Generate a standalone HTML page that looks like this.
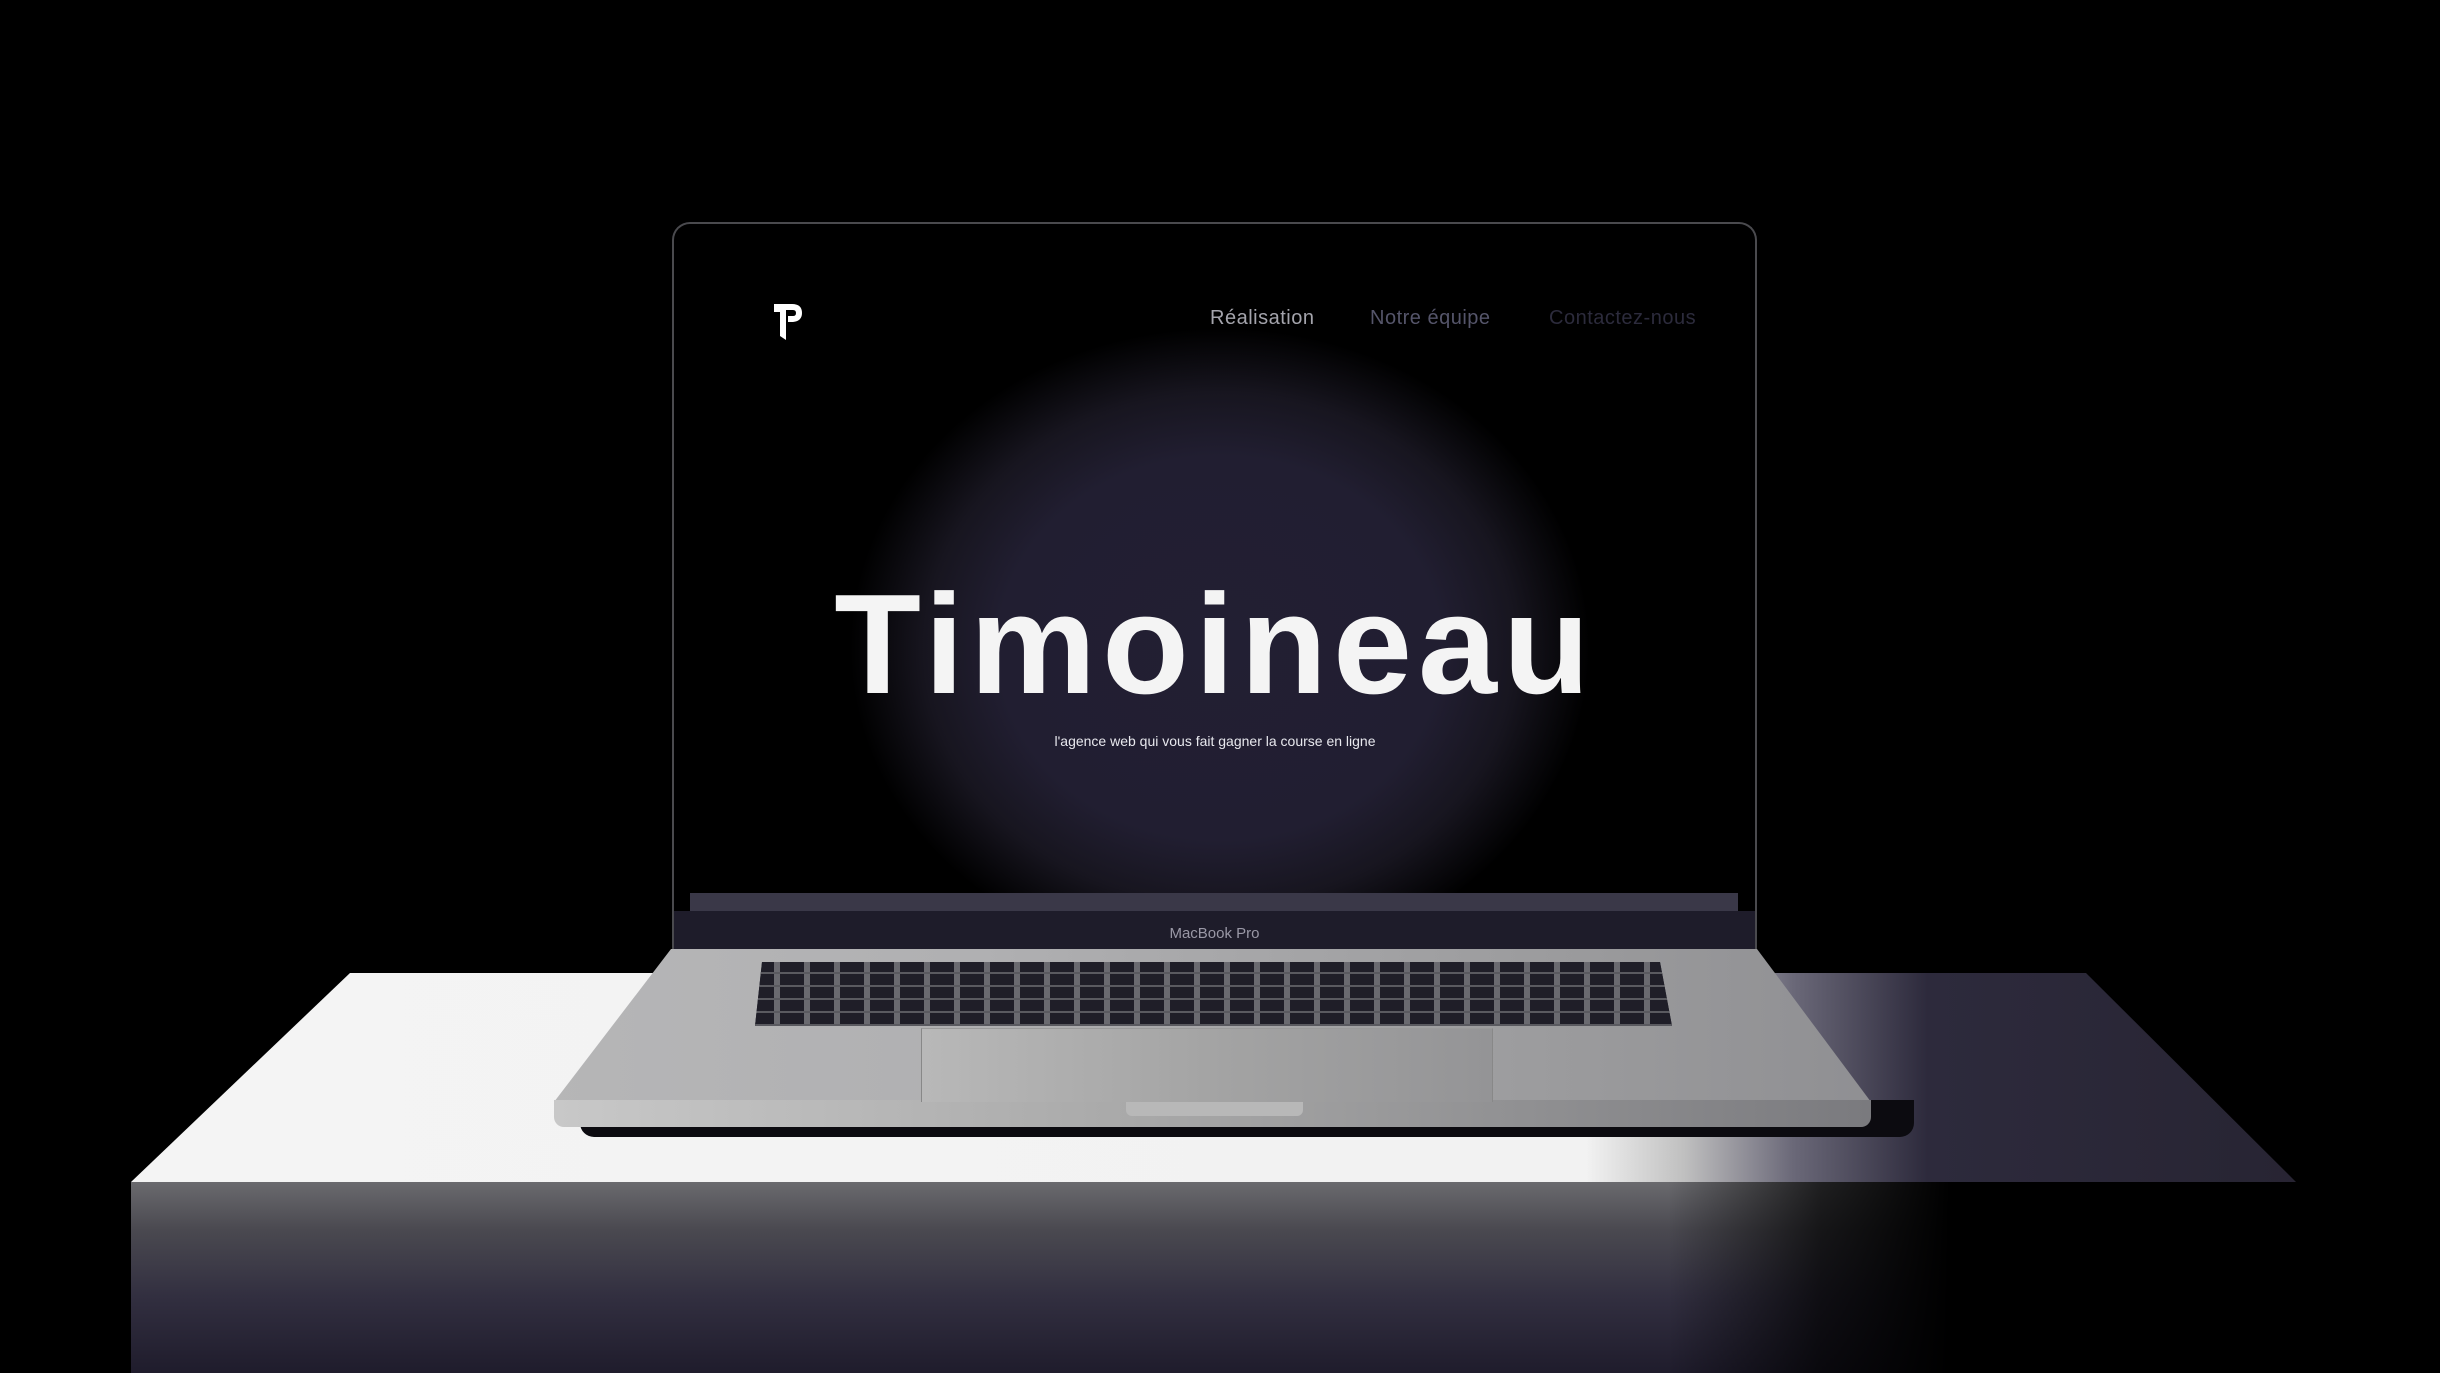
<!DOCTYPE html>
<html><head><meta charset="utf-8"><style>
*{margin:0;padding:0;box-sizing:border-box}
html,body{width:2440px;height:1373px;background:#000;overflow:hidden;position:relative;font-family:"Liberation Sans",sans-serif}
.abs{position:absolute}
</style></head><body>
<!-- table top -->
<div class="abs" style="left:0;top:0;width:2440px;height:1373px;clip-path:polygon(350px 973px,2086px 973px,2296px 1182px,131px 1182px);background:linear-gradient(90deg,#f4f4f4 0%,#f2f2f2 65%,#c0c0c0 69%,#6a6878 73.5%,#2d2a3c 79%,#25222f 100%)"></div>
<!-- front face -->
<div class="abs" style="left:131px;top:1182px;width:2165px;height:191px;background:linear-gradient(180deg,#6a6a6e 0%,#4a4950 25%,#322f40 60%,#1f1c2c 100%)"></div>
<div class="abs" style="left:131px;top:1182px;width:2165px;height:191px;background:linear-gradient(90deg,rgba(0,0,0,0) 0%,rgba(0,0,0,0) 71%,rgba(0,0,0,.7) 78%,#000 84%)"></div>
<!-- laptop shadow -->
<div class="abs" style="left:580px;top:1100px;width:1334px;height:37px;background:#0c0b10;border-radius:0 0 14px 14px"></div>
<!-- screen lid -->
<div class="abs" style="left:672px;top:222px;width:1085px;height:730px;background:#000;border:2px solid #4a4a4e;border-bottom:none;border-radius:18px 18px 0 0"></div>
<div class="abs" style="left:690px;top:238px;width:1048px;height:660px;background:radial-gradient(ellipse 370px 320px at 530px 410px,#221f33 0%,#211e31 60%,#17151f 80%,rgba(0,0,0,0) 100%)"></div>
<!-- nav -->
<svg class="abs" style="left:772px;top:302px" width="34" height="40" viewBox="0 0 34 40"><path d="M2 2 L20 2 Q30 2 30 11 Q30 19 21 20 L16 20 L16 14 L21 14 Q24 14 24 11 Q24 8 21 8 L14 8 L14 38 L8 34 L8 10 L2 10 Z" fill="#fff"/></svg>
<div class="abs" style="left:1210px;top:307px;font-size:20px;color:#a4a4ac;letter-spacing:.5px">Réalisation</div>
<div class="abs" style="left:1370px;top:307px;font-size:20px;color:#55556a;letter-spacing:.5px">Notre équipe</div>
<div class="abs" style="left:1549px;top:307px;font-size:20px;color:#2c2b3c;letter-spacing:.5px">Contactez-nous</div>
<!-- title -->
<div class="abs" style="left:700px;top:560px;width:1030px;text-align:center;font-size:142px;color:#f4f4f4;letter-spacing:6px;line-height:1;padding-top:14px;font-weight:bold">Timoineau</div>
<div class="abs" style="left:700px;top:733px;width:1030px;text-align:center;font-size:14px;color:#e8e8ee">l'agence web qui vous fait gagner la course en ligne</div>
<!-- bottom screen strip -->
<div class="abs" style="left:690px;top:893px;width:1048px;height:18px;background:#3a3848"></div>
<div class="abs" style="left:674px;top:911px;width:1081px;height:40px;background:#1e1c2a"></div>
<div class="abs" style="left:674px;top:925px;width:1081px;text-align:center;font-size:15px;color:#9a98a6">MacBook Pro</div>
<!-- base -->
<div class="abs" style="left:0;top:0;width:2440px;height:1373px;clip-path:polygon(671px 949px,1757px 949px,1871px 1102px,554px 1102px);background:linear-gradient(90deg,#bdbdbd 0%,#b0b0b2 40%,#9a9a9c 65%,#7a7a80 100%)"></div>
<div class="abs" style="left:554px;top:1100px;width:1317px;height:27px;border-radius:0 0 10px 10px;background:linear-gradient(90deg,#c8c8c8,#a8a8a8 45%,#7a7a7e 100%)"></div>
<div class="abs" style="left:1126px;top:1102px;width:177px;height:14px;background:#b8b8b8;border-radius:0 0 6px 6px"></div>
<!-- keyboard -->
<div class="abs" style="left:0;top:0;width:2440px;height:1373px;clip-path:polygon(762px 962px,1660px 962px,1672px 1026px,755px 1026px);background:repeating-linear-gradient(90deg,#1f1e28 0 24px,#6a6a70 24px 30px),#1f1e28"></div>
<div class="abs" style="left:0;top:0;width:2440px;height:1373px;clip-path:polygon(762px 962px,1660px 962px,1672px 1026px,755px 1026px);background:repeating-linear-gradient(180deg,rgba(0,0,0,0) 0 10px,#5a5a60 10px 12px,rgba(0,0,0,0) 12px 13px)"></div>
<!-- trackpad -->
<div class="abs" style="left:921px;top:1028px;width:572px;height:74px;background:linear-gradient(90deg,#b8b8b8,#a4a4a4 50%,#949496);border-left:1px solid #888;border-right:1px solid #888;border-top:1px solid #999"></div>
</body></html>
